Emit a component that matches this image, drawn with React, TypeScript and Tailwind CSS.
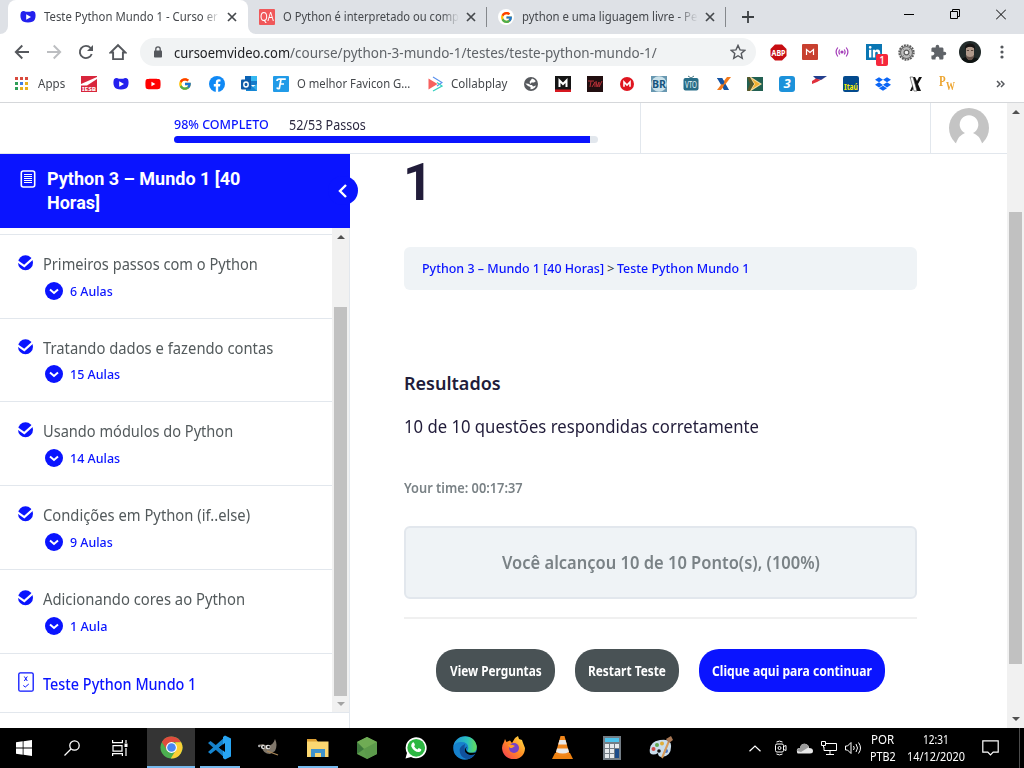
import { useLayoutEffect, useRef, useState, type ReactNode } from "react";
import { FcGoogle } from "react-icons/fc";
import { FaYoutube, FaDropbox, FaLinkedinIn } from "react-icons/fa";
import { MdExtension } from "react-icons/md";

/* One line of text, condensed or widened to an exact width. */
function Fit({ w, className = "", children }: { w: number; className?: string; children: ReactNode }) {
  const ref = useRef<HTMLSpanElement>(null);
  const [scale, setScale] = useState(1);
  useLayoutEffect(() => {
    if (ref.current) setScale(w / ref.current.offsetWidth);
  }, [w]);
  return (
    <span className={`block shrink-0 whitespace-nowrap ${className}`} style={{ width: w }}>
      <span ref={ref} className="inline-block origin-left" style={{ transform: `scaleX(${scale})` }}>
        {children}
      </span>
    </span>
  );
}

function Slot({ children }: { children: ReactNode }) {
  return <div className="flex h-full w-8 shrink-0 items-center justify-center">{children}</div>;
}

function CursoLogo() {
  return (
    <svg width="16" height="14" viewBox="0 0 16 14">
      <path d="M1 2.2C2.500.6 4.300.7 5.800 1.700h4.400C11.700.7 13.500.6 15 2.200c.8 2 .8 5-.2 7.400-1.200 2.200-3.300 3-6.800 3s-5.600-.8-6.800-3C.2 7.200.2 4.200 1 2.200Z" fill="#2320ee" />
      <path d="M6.200 4.300v5.400L11 7Z" fill="#fff" />
    </svg>
  );
}

function Close({ className = "" }: { className?: string }) {
  return (
    <svg className={`shrink-0 ${className}`} width="10" height="10" viewBox="0 0 10 10">
      <path d="M1 1l8 8M9 1L1 9" stroke="#45484c" strokeWidth="1.700" />
    </svg>
  );
}

function TabStrip() {
  return (
    <div className="flex h-[34px] bg-[#dee1e6] text-xs text-[#45484c]">
      <div className="flex w-2 items-end bg-white">
        <div className="h-full w-2 rounded-br-lg bg-[#dee1e6]" />
      </div>
      <div className="flex w-[240px] items-center rounded-t-lg bg-white pl-3">
        <CursoLogo />
        <div className="ml-2 w-[176px] overflow-hidden [mask-image:linear-gradient(to_right,black_90%,transparent)]">
          <Fit w={174}>Teste Python Mundo 1 - Curso er</Fit>
        </div>
        <Close className="ml-[7px]" />
      </div>
      <div className="flex w-[239px] items-center bg-white">
        <div className="flex h-full w-full items-center rounded-bl-lg bg-[#dee1e6] pl-[11px]">
          <div className="flex size-4 items-center justify-center rounded-[1px] bg-[#f0585a] text-[12px] text-white">
            <Fit w={14}>QA</Fit>
          </div>
          <div className="ml-2 w-[176px] overflow-hidden [mask-image:linear-gradient(to_right,black_90%,transparent)]">
            <Fit w={176}>O Python é interpretado ou comp</Fit>
          </div>
          <Close className="ml-[7px]" />
          <div className="ml-[10px] h-5 w-px bg-[#85888c]" />
        </div>
      </div>
      <div className="flex w-[239px] items-center pl-[11px]">
        <div className="flex size-4 items-center justify-center rounded-full bg-white">
          <FcGoogle size={13} />
        </div>
        <div className="ml-2 w-[176px] overflow-hidden [mask-image:linear-gradient(to_right,black_88%,transparent)]">
          <Fit w={175}>python e uma liguagem livre - Pe</Fit>
        </div>
        <Close className="ml-[7px]" />
        <div className="ml-[10px] h-5 w-px bg-[#85888c]" />
      </div>
      <div className="flex flex-1 items-center pl-4">
        <svg width="12" height="12" viewBox="0 0 12 12">
          <path d="M6 0v12M0 6h12" stroke="#3c4043" strokeWidth="1.800" />
        </svg>
      </div>
      <div className="flex w-[138px] pt-[9px]">
        <svg className="ml-[18px]" width="10" height="11" viewBox="0 0 10 11">
          <path d="M0 5.500h10" stroke="#000" />
        </svg>
        <svg className="ml-9" width="10" height="11" viewBox="0 0 10 11">
          <path d="M.5 2.500h7v7h-7zM2.500 2.500v-2h7v7h-2" fill="none" stroke="#000" />
        </svg>
        <svg className="ml-9" width="10" height="11" viewBox="0 0 10 11">
          <path d="M0 .5l10 10M10 .5l-10 10" stroke="#000" />
        </svg>
      </div>
    </div>
  );
}

function Toolbar() {
  return (
    <div className="flex h-9 items-center bg-white pl-1.5">
      <Slot>
        <svg width="16" height="16" viewBox="0 0 16 16" fill="none" stroke="#55585d" strokeWidth="1.900">
          <path d="M15 8H2M8.300 1.500L1.800 8l6.500 6.500" />
        </svg>
      </Slot>
      <Slot>
        <svg width="16" height="16" viewBox="0 0 16 16" fill="none" stroke="#bcbec1" strokeWidth="1.900">
          <path d="M1 8h13M7.700 1.500L14.200 8l-6.500 6.500" />
        </svg>
      </Slot>
      <Slot>
        <svg width="16" height="16" viewBox="0 0 16 16">
          <path d="M13.700 10A6.100 6.100 0 1 1 12.600 4" fill="none" stroke="#55585d" strokeWidth="1.900" />
          <path d="M15 1v6H9z" fill="#55585d" />
        </svg>
      </Slot>
      <Slot>
        <svg width="18" height="18" viewBox="0 0 18 18" fill="none" stroke="#55585d" strokeWidth="1.900">
          <path d="M1.500 9.500h2.600v6.600h9.800V9.500h2.600L9 2.200z" />
        </svg>
      </Slot>
      <div className="ml-1.5 flex h-7 w-[616px] items-center rounded-full bg-[#f1f3f4] pl-3.5 text-[14px] text-[#5f6368]">
        <svg width="8" height="12" viewBox="0 0 8 12">
          <path d="M1.800 5V3a2.200 2.200 0 0 1 4.400 0v2" fill="none" stroke="#55585d" strokeWidth="1.300" />
          <rect y="4.500" width="8" height="7" rx=".8" fill="#55585d" />
        </svg>
        <div className="ml-3 flex">
          <Fit w={116} className="text-[#202124]">cursoemvideo.com</Fit>
          <Fit w={367}>/course/python-3-mundo-1/testes/teste-python-mundo-1/</Fit>
        </div>
        <svg className="ml-[73px]" width="16" height="16" viewBox="0 0 15 15" fill="none" stroke="#55585d" strokeWidth="1.300">
          <path d="M7.500 1.300l1.900 4.200 4.500.4-3.400 3 1 4.500-4-2.400-4 2.400 1-4.500-3.400-3 4.500-.4z" />
        </svg>
      </div>
      <div className="ml-1.5 flex h-full">
        <Slot>
          <svg width="17" height="17" viewBox="0 0 17 17">
            <path d="M5 .5h7L16.500 5v7L12 16.500H5L.5 12V5z" fill="#c70d12" />
            <text x="1.500" y="11.500" fontSize="8" fontWeight="700" fill="#fff" textLength="14" lengthAdjust="spacingAndGlyphs">ABP</text>
          </svg>
        </Slot>
        <Slot>
          <svg width="16" height="16" viewBox="0 0 16 16">
            <rect width="16" height="16" rx="1" fill="#c8402f" />
            <path d="M4.500 11V5.500L8 8.500l3.500-3V11" fill="none" stroke="#fff" strokeWidth="1.200" />
          </svg>
        </Slot>
        <Slot>
          <svg width="14" height="12" viewBox="0 0 14 12" fill="none" stroke="#a33cb8" strokeWidth="1.200">
            <circle cx="7" cy="6" r="1" fill="#a33cb8" />
            <path d="M4.800 3.500q-1.800 2.500 0 5M9.200 3.500q1.800 2.500 0 5M2.800 1.500q-3.400 4.500 0 9M11.200 1.500q3.400 4.500 0 9" />
          </svg>
        </Slot>
        <Slot>
          <div className="relative flex size-4 items-center justify-center bg-[#0a76b3] text-white">
            <FaLinkedinIn size={13} />
            <span className="absolute top-[10px] left-[10px] flex h-3 w-3 items-center justify-center rounded-[2px] bg-[#f5283c] text-[10px] leading-none font-medium">1</span>
          </div>
        </Slot>
        <Slot>
          <svg width="17" height="17" viewBox="0 0 17 17" fill="none">
            <circle cx="8.500" cy="8.500" r="7.200" stroke="#5a5a5a" strokeWidth="2" strokeDasharray="1.900 .927" />
            <circle cx="8.500" cy="8.500" r="6" fill="#bdbdbd" stroke="#6a6a6a" strokeWidth="1.200" />
            <circle cx="8.500" cy="8.500" r="2.400" fill="#f4f4f4" stroke="#5a5a5a" strokeWidth="1.200" />
            <path d="M5 5l1.500 1.500M12 5l-1.500 1.500M5 12l1.500-1.500M12 12l-1.500-1.500" stroke="#8a8a8a" />
          </svg>
        </Slot>
        <Slot>
          <MdExtension size={17} color="#5f6368" />
        </Slot>
        <Slot>
          <svg width="22" height="22" viewBox="0 0 22 22">
            <circle cx="11" cy="11" r="11" fill="#222b2a" />
            <path d="M2.500 18q4-3 8.500-2.500t8.500 2.500q-8.500 8-17 0z" fill="#0e1312" />
            <path d="M7 7q4-3 8 0v7q-1 5-4 5t-4-5z" fill="#b09a8b" />
            <path d="M6 9Q5 2.500 11 2.500t5 6.500L14.500 6.500Q11 5 7.500 6.500z" fill="#171413" />
            <path d="M7.800 9.500h2.200M12 9.500h2.200" stroke="#4e3c34" strokeWidth=".9" />
            <path d="M7 14q0 5 4 5.300 4-.3 4-5.300-1 2-4 2t-4-2z" fill="#65534a" />
          </svg>
        </Slot>
        <Slot>
          <svg width="4" height="14" viewBox="0 0 4 14" fill="#55585d">
            <circle cx="2" cy="2" r="1.600" />
            <circle cx="2" cy="7" r="1.600" />
            <circle cx="2" cy="12" r="1.600" />
          </svg>
        </Slot>
      </div>
    </div>
  );
}

const appColors = ["#d94a3d", "#d94a3d", "#d94a3d", "#2f9e57", "#3f7de8", "#e8b020", "#2f9e57", "#e8b020", "#e8b020"];

function Bookmarks() {
  return (
    <div className="flex h-[33px] items-center border-b border-[#d5d7da] bg-white pb-[5px] text-xs text-[#45484c]">
      <div className="ml-[15px] grid w-[13px] grid-cols-3 gap-[2px]">
        {appColors.map((c, i) => (
          <span key={i} className="size-[3px]" style={{ background: c }} />
        ))}
      </div>
      <Fit w={27} className="ml-[10px]">Apps</Fit>
      <div className="ml-2 flex h-full">
        <Slot>
          <svg className="overflow-visible" width="16" height="16" viewBox="0 0 16 16">
            <path d="M0 0h16v16H0z" fill="#d8263c" />
            <path d="M0 8L16 1v2L6 9.500H0z" fill="#fff" />
            <text x="1" y="15.300" fontSize="6" fontWeight="700" fill="#fff" textLength="14" lengthAdjust="spacingAndGlyphs">IESB</text>
          </svg>
        </Slot>
        <Slot><CursoLogo /></Slot>
        <Slot><FaYoutube size={16} color="#f00" /></Slot>
        <Slot><FcGoogle size={14} /></Slot>
        <Slot>
          <svg width="16" height="16" viewBox="0 0 16 16">
            <circle cx="8" cy="8" r="8" fill="#1089f5" />
            <path d="M6.800 16v-5.600h-2V8.100h2V6.400c0-2 1.200-3.100 3-3.100l1.700.1v2h-1c-1 0-1.300.5-1.300 1.200v1.500h2.200l-.4 2.300H9.200V16z" fill="#fff" />
          </svg>
        </Slot>
        <Slot>
          <svg width="17" height="16" viewBox="0 0 17 16">
            <path d="M4 0h12v9H4z" fill="#1a8fd8" />
            <path d="M4 0h6v5H4z" fill="#0a63b5" />
            <path d="M10 0h6v5h-6z" fill="#35b8f1" />
            <path d="M10 5h6v4h-6z" fill="#1479c9" />
            <path d="M16 8v7H6l10-7z" fill="#30a9e8" />
            <path d="M10 9l6 6H5v-3z" fill="#1686d4" />
            <rect y="3.500" width="10" height="10" rx="1" fill="#0f5ba8" />
            <ellipse cx="5" cy="8.500" rx="2.200" ry="2.500" fill="none" stroke="#fff" strokeWidth="1.400" />
          </svg>
        </Slot>
        <Slot>
          <svg width="16" height="16" viewBox="0 0 16 16">
            <rect width="16" height="16" rx="1" fill="#219be8" />
            <path d="M4 5q0-1.800 2.300-1.800h6.500M8 3.400L6.300 12.500q-2 .5-2.300-1M7 8h4" fill="none" stroke="#fff" strokeWidth="1.700" />
          </svg>
        </Slot>
      </div>
      <Fit w={113}>O melhor Favicon G...</Fit>
      <div className="ml-[9px] flex w-8 justify-center">
        <svg width="15" height="16" viewBox="0 0 15 16">
          <path d="M5 1l9 5.500L9 10" fill="none" stroke="#5a91ee" strokeWidth="1.200" />
          <path d="M5 15l9-5-5-3.500" fill="none" stroke="#35d0c0" strokeWidth="1.200" />
          <path d="M.5 2.500v11L9.500 8z" fill="#f7605f" />
        </svg>
      </div>
      <Fit w={56}>Collabplay</Fit>
      <div className="ml-2 flex h-full">
        <Slot>
          <svg width="14" height="14" viewBox="0 0 14 14">
            <circle cx="7" cy="7" r="7" fill="#56595d" />
            <path d="M8 1.500q2.500.5 3.800 2.700L10 5.500H7.500L6.500 7 5.500 5zM1.300 6.500l3 .3L6.500 8H8l1 1.500 3-1q-1.500 4-5.500 3.800V10L4 9z" fill="#fff" />
          </svg>
        </Slot>
        <Slot>
          <svg width="16" height="16" viewBox="0 0 16 16">
            <path d="M0 0h16v16H0z" fill="#151515" />
            <path d="M0 13.500h16V16H0z" fill="#d71820" />
            <path d="M4.500 11V4.500L8 8l3.500-3.500V11" fill="none" stroke="#fff" strokeWidth="2" />
          </svg>
        </Slot>
        <Slot>
          <svg width="16" height="16" viewBox="0 0 16 16">
            <path d="M0 0h16v16H0z" fill="#210e10" />
            <path d="M1 5h6M4 5l-1 6M5 11l3-5v5M9 5l1 6 2-5 0 5 3-6" fill="none" stroke="#b62f36" />
          </svg>
        </Slot>
        <Slot>
          <svg width="14" height="14" viewBox="0 0 14 14">
            <circle cx="7" cy="7" r="7" fill="#df1620" />
            <path d="M4 9.700V5l3 3 3-3v4.700" fill="none" stroke="#fff" strokeWidth="1.600" />
          </svg>
        </Slot>
        <Slot>
          <svg className="overflow-visible" width="16" height="16" viewBox="0 0 16 16">
            <path d="M0 0h16v16H0z" fill="#6797b0" />
            <circle cx="8" cy="8" r="7.800" fill="#c9e1ea" />
            <text x="1" y="12" fontSize="11" fontWeight="700" fill="#17557e" textLength="14" lengthAdjust="spacingAndGlyphs">BR</text>
          </svg>
        </Slot>
        <Slot>
          <svg className="overflow-visible" width="16" height="16" viewBox="0 0 16 16">
            <path d="M5 0l3 2 3-2" fill="none" stroke="#497984" />
            <rect x=".5" y="2" width="15" height="12.500" rx="2" fill="#276d87" />
            <text x="2" y="11.500" fontSize="8.500" fill="#e4f3f7" textLength="12" lengthAdjust="spacingAndGlyphs">VTO</text>
          </svg>
        </Slot>
        <Slot>
          <svg width="15" height="14" viewBox="0 0 15 14">
            <path d="M1 1h5l3 5 4 7H8z" fill="#1554a4" />
            <path d="M11 0h4L5 13H1z" fill="#f27a1c" />
            <path d="M1 1h5l2.500 4L7 8zM9 7l3.500 6H8L7.500 9z" fill="#1554a4" />
          </svg>
        </Slot>
        <Slot>
          <svg width="16" height="14" viewBox="0 0 16 14">
            <path d="M0 0h16v14H0z" fill="#226052" />
            <path d="M4 0l11 7-11 7H0l7-7-7-7z" fill="#f3d9a0" />
            <path d="M5 2l8 5-8 5 3-5z" fill="#f1b030" />
            <path d="M0 0h3l4 7-4 7H0l3-7z" fill="#57582a" />
          </svg>
        </Slot>
        <Slot>
          <div className="flex size-4 items-center justify-center rounded-[3px] bg-[#1d92da] text-[13px] leading-none font-bold text-white italic">3</div>
        </Slot>
        <Slot>
          <svg width="15" height="16" viewBox="0 0 15 16">
            <path d="M1 0h14L9 4 4 3z" fill="#213f8e" />
            <path d="M0 8V5l4-2.500L9 4l5-3L5 6z" fill="#e0303c" />
          </svg>
        </Slot>
        <Slot>
          <svg className="overflow-visible" width="16" height="16" viewBox="0 0 16 16">
            <rect width="16" height="16" rx="2" fill="#034a8d" />
            <text x="1" y="13.500" fontSize="9" fontWeight="700" fill="#fff200" textLength="14" lengthAdjust="spacingAndGlyphs">Itaú</text>
          </svg>
        </Slot>
        <Slot><FaDropbox size={16} color="#0b66f6" /></Slot>
        <Slot>
          <svg width="13" height="16" viewBox="0 0 13 16">
            <path d="M1 1h5l2 4 2-4h3L9 8l3 7H7L5 11l-2 4H1l3-7z" fill="#111" />
            <path d="M1 1h3l4 14H5L3 8z" fill="#fff" stroke="#444" strokeWidth=".6" />
          </svg>
        </Slot>
        <Slot>
          <div className="flex h-4 w-4 items-start font-['Liberation_Serif',serif] leading-none font-bold text-[#eda633]">
            <span className="flex w-[7px] -translate-y-px text-[14px]"><Fit w={7}>P</Fit></span>
            <span className="flex w-[10px] translate-y-1 text-[12px]"><Fit w={9}>W</Fit></span>
          </div>
        </Slot>
      </div>
      <svg className="ml-[33px]" width="9" height="8" viewBox="0 0 9 8" fill="none" stroke="#55585d" strokeWidth="1.500">
        <path d="M1 1l3 3-3 3M5 1l3 3-3 3" />
      </svg>
    </div>
  );
}

function CheckBadge() {
  return (
    <svg className="mt-[2px] shrink-0" width="16" height="16" viewBox="0 0 16 16">
      <circle cx="8.500" cy="7.700" r="7.500" fill="#0a14ff" />
      <path d="M.5 6.300l6.800 4.800L16 3.200" fill="none" stroke="#fff" strokeWidth="2.200" />
    </svg>
  );
}

const lessons = [
  { title: "Primeiros passos com o Python", w: 214.5, count: "6 Aulas", cw: 43 },
  { title: "Tratando dados e fazendo contas", w: 230, count: "15 Aulas", cw: 50 },
  { title: "Usando módulos do Python", w: 190.5, count: "14 Aulas", cw: 50 },
  { title: "Condições em Python (if..else)", w: 207.5, count: "9 Aulas", cw: 43 },
  { title: "Adicionando cores ao Python", w: 202.5, count: "1 Aula", cw: 37 },
];

function Arrow({ down = false, color = "#505050" }: { down?: boolean; color?: string }) {
  return (
    <svg width="8" height="4" viewBox="0 0 8 4">
      <path d={down ? "M0 0h8L4 4z" : "M0 4h8L4 0z"} fill={color} />
    </svg>
  );
}

function Sidebar() {
  return (
    <aside className="flex w-[350px] shrink-0 flex-col">
      <div className="relative flex h-[74px] bg-[#0a14ff] pt-[13px] pl-[20px] text-white">
        <svg className="mt-[3px]" width="16" height="18" viewBox="0 0 16 18" fill="none" stroke="#fff">
          <rect x="1.300" y="1" width="13.400" height="16" rx="2" strokeWidth="1.600" />
          <path d="M4 4.500h8M4 6.500h8M4 8.500h8M4 10.500h8M4 12.500h8" strokeWidth="1" />
        </svg>
        <div className="ml-[11px] font-['Roboto',sans-serif] text-[18px] leading-6 font-bold">
          <Fit w={193}>Python 3 – Mundo 1 [40</Fit>
          <Fit w={53}>Horas]</Fit>
        </div>
        <span className="absolute top-[22px] left-[328px] z-10 flex h-[29px] w-[30px] items-center justify-center rounded-full bg-[#0a14ff]">
          <svg width="10" height="14" viewBox="0 0 10 14">
            <path d="M8 1L2 7l6 6" fill="none" stroke="#fff" strokeWidth="2.400" />
          </svg>
        </span>
      </div>
      <div className="flex flex-1 flex-col border-r border-[#e2e7ed]">
        <div className="flex h-[485px] border-b border-[#e2e7ed]">
          <div className="w-[332px] pt-1.5">
            {lessons.map((l, i) => (
              <div key={l.title} className={`border-t border-[#e2e7ed] pt-[18px] pl-[17px] ${i === 1 ? "h-[83px]" : "h-[84px]"}`}>
                <div className="flex h-[22px] text-[16px] leading-[22px] text-[#535a5c]">
                  <CheckBadge />
                  <Fit w={l.w} className="ml-[10px]">{l.title}</Fit>
                </div>
                <div className={`ml-7 flex h-[18px] items-center text-[13px] leading-[18px] font-medium text-[#0a14ff] ${i === 1 ? "mt-[6px]" : "mt-[7px]"}`}>
                  <svg width="18" height="18" viewBox="0 0 18 18">
                    <circle cx="9" cy="9" r="9" fill="#0a14ff" />
                    <path d="M5 7.500l4 3.500 4-3.500" fill="none" stroke="#fff" strokeWidth="2" />
                  </svg>
                  <Fit w={l.cw} className="ml-[7px]">{l.count}</Fit>
                </div>
              </div>
            ))}
            <div className="flex border-t border-[#e2e7ed] pt-[18px] pl-[18px] text-[16px] leading-[22px] font-medium text-[#0a14ff]">
              <svg width="16" height="20" viewBox="0 0 16 20" fill="none" stroke="#0a14ff">
                <rect x=".8" y=".8" width="14.400" height="18.400" rx="1.500" strokeWidth="1.300" />
                <path d="M6.300 4.500l3 4.500M9.300 4.500l-3 4.500M5.300 13.500l2 1.500 3.500-3" />
              </svg>
              <Fit w={153} className="ml-[9px] pt-px">Teste Python Mundo 1</Fit>
            </div>
          </div>
          <div className="flex w-[17px] flex-col items-center bg-[#f1f1f1] pt-[7px] pb-[6px]">
            <Arrow />
            <div className="mt-[68px] mb-[6px] w-[13px] flex-1 bg-[#c1c1c1]" />
            <Arrow down color="#a3a3a3" />
          </div>
        </div>
      </div>
    </aside>
  );
}

function Header() {
  return (
    <header className="flex h-[51px] border-b border-[#e2e7ed]">
      <div className="w-[641px] border-r border-[#e2e7ed] pt-3 pl-[174px]">
        <div className="flex h-[19px] items-center gap-5 text-[13px]">
          <Fit w={95} className="font-medium text-[#0a14ff]">98% COMPLETO</Fit>
          <Fit w={77} className="text-[14px] text-[#2b2840]">52/53 Passos</Fit>
        </div>
        <div className="mt-[2px] h-[7px] w-[424px] overflow-hidden rounded-full bg-[#e2e7ed]">
          <div className="h-full w-[416px] bg-[#0a14ff]" />
        </div>
      </div>
      <div className="w-[290px] border-r border-[#e2e7ed]" />
      <div className="flex flex-1 items-start justify-center pt-[5px]">
        <svg width="40" height="40" viewBox="0 0 40 40">
          <circle cx="20" cy="20" r="20" fill="#c4c4c4" />
          <path d="M7 35q3-8 9-10a9.300 9.300 0 1 1 8 0q6 2 9 10l-1 5H8z" fill="#fff" />
        </svg>
      </div>
    </header>
  );
}

function Content() {
  return (
    <main className="w-[657px] pr-[90px] pl-[54px] text-[#211c3a]">
      <h1 className="h-[57px] -indent-px font-['Roboto',sans-serif] text-[52px] leading-[57px] font-bold">1</h1>
      <nav className="mt-9 flex h-[43px] items-center rounded-md bg-[#eff3f6] pl-[18px] text-[13px] font-medium text-[#0a14ff]">
        <Fit w={182}>Python 3 – Mundo 1 [40 Horas]</Fit>
        <Fit w={7} className="mx-[3px] font-normal text-[#333]">&gt;</Fit>
        <Fit w={132}>Teste Python Mundo 1</Fit>
      </nav>
      <h2 className="mt-[81px] text-[18px] leading-6 font-semibold">
        <Fit w={97}>Resultados</Fit>
      </h2>
      <p className="mt-[19px] text-[18px] leading-6">
        <Fit w={355}>10 de 10 questões respondidas corretamente</Fit>
      </p>
      <p className="mt-[40px] text-[14px] leading-5 font-semibold text-[#7a8286]">
        <Fit w={119}>Your time: 00:17:37</Fit>
      </p>
      <div className="mt-7 flex h-[73px] items-center justify-center rounded-md border-2 border-[#e2e7ed] bg-[#eff3f6] text-[18px] font-semibold text-[#7a8286]">
        <Fit w={318}>Você alcançou 10 de 10 Ponto(s), (100%)</Fit>
      </div>
      <hr className="mt-[18px] h-[2px] border-0 bg-[#f0f0f0]" />
      <div className="mt-[30px] flex h-[43px] justify-center gap-5 text-[14px] font-bold text-white">
        <button className="flex w-[119px] items-center justify-center rounded-[20px] bg-[#495255] pb-px"><Fit w={92}>View Perguntas</Fit></button>
        <button className="flex w-[104px] items-center justify-center rounded-[20px] bg-[#495255] pb-px"><Fit w={78}>Restart Teste</Fit></button>
        <button className="flex w-[186px] items-center justify-center rounded-[20px] bg-[#0a14ff] pb-px"><Fit w={160}>Clique aqui para continuar</Fit></button>
      </div>
    </main>
  );
}

function Task({ active = false, open = false, children }: { active?: boolean; open?: boolean; children: ReactNode }) {
  return (
    <div className={`flex flex-col items-center ${active ? "mr-px w-12 bg-[#343434]" : "w-[49px]"}`}>
      <div className="flex h-[38px] items-center pt-px">{children}</div>
      <div className={`h-[2px] ${active ? "w-full bg-[#76b9ed]" : open ? "w-10 bg-[#76b9ed]" : ""}`} />
    </div>
  );
}

function Taskbar() {
  return (
    <footer className="flex h-10 overflow-hidden bg-black text-white">
      <div className="flex w-[147px] items-center pl-4">
        <svg width="16" height="16" viewBox="0 0 16 16" fill="#fff">
          <path d="M0 2.300L6.700 1.300v6.300H0zM7.500 1.200L16 0v7.600H7.500zM0 8.400h6.700v6.300L0 13.700zM7.500 8.400H16V16l-8.500-1.200z" />
        </svg>
        <svg className="ml-8" width="16" height="16" viewBox="0 0 16 16" fill="none" stroke="#fff" strokeWidth="1.300">
          <circle cx="10.500" cy="5.500" r="4.700" />
          <path d="M7 9L.5 15.500" />
        </svg>
        <svg className="ml-8" width="16" height="16" viewBox="0 0 16 16" fill="none" stroke="#fff" strokeWidth="1.200">
          <path d="M.6 0v2.600h9.800V0M1 5.600h9v5.600H1zM.6 16v-2.400h9.800V16M14 0v3M14 8v8" />
          <path d="M12.500 3.500h3v3.500h-3z" fill="#fff" stroke="none" />
        </svg>
      </div>
      <Task active>
        <svg width="23" height="23" viewBox="0 0 24 24">
          <circle cx="12" cy="12" r="11.500" fill="#4caf50" />
          <path d="M2 6.200A11.500 11.500 0 0 1 22 6.500H12L7.500 15z" fill="#df4c3d" />
          <path d="M22 6.500A11.500 11.500 0 0 1 11.200 23.500L17 14l-1-7.500z" fill="#fccf36" />
          <circle cx="12" cy="12" r="5.700" fill="#fff" />
          <circle cx="12" cy="12" r="4.500" fill="#4a86f3" />
        </svg>
      </Task>
      <div className="-ml-px flex">
        <Task open>
          <svg width="25" height="25" viewBox="0 0 25 25">
            <path d="M1 8l2.500-2L19 18v6z" fill="#177fc7" />
            <path d="M1 17l2.500 2L19 7V1z" fill="#1686d0" />
            <path d="M18 .5l6 3v18l-6 3-2-1.500V2z" fill="#28a5f3" />
            <path d="M18 8v9l-6-4.500z" fill="#000" />
          </svg>
        </Task>
        <Task>
          <svg width="22" height="18" viewBox="0 0 22 18">
            <path d="M0 6l5-1 4 2q6 0 8-7 3 6 0 12l-5 3q-7 0-8-7z" fill="#80776b" />
            <circle cx="5" cy="8" r="2" fill="#eee" /><circle cx="10" cy="8" r="2.300" fill="#eee" />
            <circle cx="5.500" cy="8" r="1.100" fill="#111" /><circle cx="10.500" cy="8" r="1.300" fill="#111" />
            <path d="M9 12l11 4" stroke="#ac895a" strokeWidth="1.300" />
            <circle cx="1.200" cy="7" r="1.200" fill="#aaa" />
          </svg>
        </Task>
        <Task open>
          <svg width="22" height="18" viewBox="0 0 22 18">
            <path d="M0 0h9l2 3H0z" fill="#dca034" />
            <path d="M0 2.500h21.500V18H0z" fill="#fbd771" />
            <path d="M4 18v-8h14v8h-4v-4H8v4z" fill="#3f93cc" />
          </svg>
        </Task>
        <Task>
          <svg width="20" height="22" viewBox="0 0 20 22">
            <path d="M10 0l10 5v12l-10 5-10-5V5z" fill="#5f9e4d" />
            <path d="M10 0l10 5-13 7-7-7z" fill="#6fab54" />
            <path d="M20 5v12l-10 5-3-10z" fill="#5c9a4b" />
            <path d="M0 5l7 7-7 5z" fill="#3e793c" />
          </svg>
        </Task>
        <Task>
          <svg width="22" height="22" viewBox="0 0 22 22">
            <path d="M.5 21.500l1.500-5.500A10.500 10.500 0 1 1 6 20z" fill="#fff" />
            <circle cx="11.200" cy="10.800" r="8.900" fill="#2db742" />
            <path d="M7 6.200q1.500-1.800 2.300 0l.7 1.800-.9 1.300q1.200 2.200 3.400 3.100l1.200-1.300 2.500 1.200q.5 2.300-2.500 2.800-4.800 0-7.500-5.800 0-2 .8-3.100z" fill="#fff" />
          </svg>
        </Task>
        <Task>
          <svg width="24" height="24" viewBox="0 0 24 24">
            <defs>
              <linearGradient id="edge-top"><stop stopColor="#2190d8" /><stop offset=".6" stopColor="#2bc3bd" /><stop offset="1" stopColor="#67dc55" /></linearGradient>
            </defs>
            <circle cx="12" cy="12" r="11.800" fill="#1681cc" />
            <path d="M.5 10C3-2 21-3 23.700 10q.6 7-7 7-4-.5-1.500-4Q16 6 8 6 3 6 .5 10z" fill="url(#edge-top)" />
            <path d="M12 8q-7 3-5 9 2 6 9 6 4-1.500 6-5-10 3-10-4-1-3 0-6z" fill="#10519d" />
            <path d="M14 10.500q-2.500 3.500 1 5.700 4 1.500 9.500-.5v3l-1.500-1q-4 2-7 1-4.500-1.500-4-5 .3-2.500 2-3.200z" fill="#000" />
          </svg>
        </Task>
        <Task>
          <svg width="23" height="23" viewBox="0 0 23 23">
            <defs>
              <linearGradient id="fox" x1="1" x2="0" y1="0" y2="1"><stop stopColor="#ffe848" /><stop offset=".5" stopColor="#ff8a24" /><stop offset="1" stopColor="#f4325a" /></linearGradient>
            </defs>
            <path d="M3 3l1.500 3L8 4.500 10 7l3-5 3-2 1 3 3 1 1 3 2 5c0 15-22 15-23 0q0-3 2-6z" fill="url(#fox)" />
            <circle cx="12" cy="12" r="5" fill="#7542c8" />
            <path d="M6 9q4-1 7 1l-3 2-2 0z" fill="#ff9c27" />
          </svg>
        </Task>
        <Task>
          <svg width="21" height="23" viewBox="0 0 21 23">
            <path d="M3 17h15l3 6H0z" fill="#ee8110" />
            <path d="M8.500 0h4l5 18q-7 4-14 0z" fill="#f2871c" />
            <path d="M7.500 4h6l1.300 4.500H6.200zM5 12.500h11l1 3.500q-6 3-13 0z" fill="#e9e9e9" />
          </svg>
        </Task>
        <Task>
          <svg width="18" height="24" viewBox="0 0 18 24">
            <path d="M0 0h18v24H0z" fill="#737d85" />
            <path d="M2 2h14v4H2z" fill="#4ec3ec" />
            <path d="M2 8h4v4H2zM7 8h4v4H7zM12 8h4v4h-4zM2 13h4v4H2zM7 13h4v4H7zM2 18h4v4H2zM7 18h4v4H7z" fill="#e6eaed" />
            <path d="M12 13h4v9h-4z" fill="#1b4c8a" />
          </svg>
        </Task>
        <Task>
          <svg width="24" height="24" viewBox="0 0 24 24">
            <path d="M1 17Q-1 6 11 4t11 7q0 9-9 10-4 0-4-4-5 3-8 0z" fill="#c9ddec" />
            <circle cx="8" cy="9" r="2" fill="#61a952" /><circle cx="13" cy="7.500" r="2" fill="#dfad36" />
            <circle cx="4.500" cy="13" r="2" fill="#d14d48" /><circle cx="10" cy="15" r="1.800" fill="#111" /><circle cx="17" cy="15" r="2" fill="#4a74c4" />
            <path d="M20 5l-7 17" stroke="#d69a59" strokeWidth="2" />
            <path d="M17 3l5-3 2 4-4 3z" fill="#a97855" />
          </svg>
        </Task>
      </div>
      <div className="flex flex-1 items-center justify-end">
        <svg width="12" height="7" viewBox="0 0 12 7" fill="none" stroke="#fff" strokeWidth="1.200"><path d="M.5 6.300L6 1l5.500 5.300" /></svg>
        <svg className="ml-[14px]" width="12" height="16" viewBox="0 0 12 16" fill="none" stroke="#fff">
          <rect x=".5" y="4" width="8" height="8" rx="1.500" /><circle cx="4.500" cy="8" r="1.500" />
          <path d="M8.500 6.500l2.500-1v5l-2.500-1M1.500 2q3-1.800 6 0M1.500 14q3 1.800 6 0" />
        </svg>
        <svg className="ml-[9px]" width="17" height="11" viewBox="0 0 17 11">
          <path d="M1 9Q0 5 4 5q1-5 6-4 3 1 3 4 4 0 4 3 0 2.500-3 2.500H3Q1 11 1 9z" fill="#e8e8e8" />
          <path d="M1 8Q1 5 4 5q1-5 6-4 2 1 3 3L5 9z" fill="#9c9c9c" />
        </svg>
        <svg className="ml-[8px]" width="16" height="14" viewBox="0 0 16 14" fill="none" stroke="#fff">
          <path d="M5 2.500h10.500v7H3V6M9 9.500v4M5 13.500h8M.5 .5h4v4h-4zM2.500 4.500v2" />
        </svg>
        <svg className="ml-[8px]" width="17" height="14" viewBox="0 0 17 14" fill="none" stroke="#fff">
          <path d="M.5 5h2L6 1.500v11L2.500 9h-2zM8.500 5q1.500 2 0 4M11 3q3 4 0 8M13.500 1.500q4 5.500 0 11" />
        </svg>
        <div className="ml-[8px] text-xs leading-[17px]">
          <Fit w={23} className="ml-px">POR</Fit>
          <Fit w={26}>PTB2</Fit>
        </div>
        <div className="ml-[11px] flex flex-col items-center text-xs leading-[17px]">
          <Fit w={26}>12:31</Fit>
          <Fit w={58}>14/12/2020</Fit>
        </div>
        <svg className="mr-5 ml-[17px]" width="17" height="16" viewBox="0 0 17 16" fill="none" stroke="#fff" strokeWidth="1.200">
          <path d="M.8.800h15.400v11.400h-5L8.500 15l-2.700-2.800h-5z" />
        </svg>
        <div className="mr-1 h-full w-px bg-[#4c4c4c]" />
      </div>
    </footer>
  );
}

export default function App() {
  return (
    <div className="flex h-[768px] w-[1024px] flex-col overflow-hidden bg-white font-['Noto_Sans','Open_Sans',sans-serif]">
      <TabStrip />
      <Toolbar />
      <Bookmarks />
      <div className="flex h-[625px]">
        <div className="flex w-[1007px] flex-col">
          <Header />
          <div className="flex flex-1">
            <Sidebar />
            <Content />
          </div>
        </div>
        <div className="flex w-[17px] flex-col items-center bg-[#f1f1f1] pt-[7px] pb-[7px]">
          <Arrow />
          <div className="mt-[98px] mb-[53px] w-[13px] flex-1 bg-[#c1c1c1]" />
          <Arrow down />
        </div>
      </div>
      <Taskbar />
    </div>
  );
}
